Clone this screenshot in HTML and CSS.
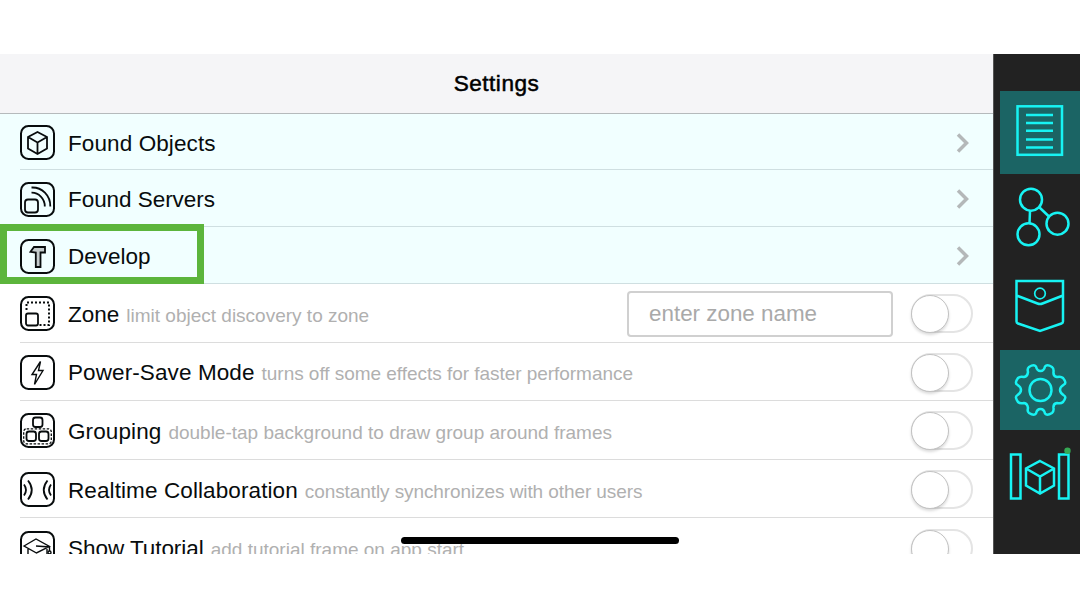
FILE: index.html
```html
<!DOCTYPE html>
<html lang="en">
<head>
<meta charset="utf-8">
<title>Settings</title>
<link rel="stylesheet" href="styles.css">
</head>
<body>
<div class="device">
  <main class="panel">
    <header class="header"><h1 class="title">Settings</h1></header>
    <div class="row nav">
      <svg class="icon" viewBox="0 0 35 35"><rect class="frame" x="1" y="1" width="33" height="33" rx="7.500"/><path d="M17.500 7 27 12v11.500l-9.500 5.500-9.500-5.500V12zM8 12l9.500 5.500L27 12M17.500 17.500V29"/></svg>
      <span class="label">Found Objects</span>
      <svg class="chevron" viewBox="0 0 14 20"><path d="M2 1.500l8.500 8.500L2 18.500"/></svg>
    </div>
    <div class="row nav">
      <svg class="icon" viewBox="0 0 35 35"><rect class="frame" x="1" y="1" width="33" height="33" rx="7.500"/><rect x="5" y="17.500" width="13" height="13" rx="3"/><path d="M11.500 10.700C18.500 10.500 25 16.500 24.800 24.500M11.500 5.500C22 5 30.500 13.500 30.300 24.500"/></svg>
      <span class="label servers">Found Servers</span>
      <svg class="chevron" viewBox="0 0 14 20"><path d="M2 1.500l8.500 8.500L2 18.500"/></svg>
    </div>
    <div class="row nav">
      <svg class="icon" viewBox="0 0 35 35"><rect class="frame" x="1" y="1" width="33" height="33" rx="7.500"/><path class="hammer" d="M10.500 12.800l3.500-4.800H25v5.500h-4.500V28h-4.700V13.500z"/></svg>
      <span class="label develop">Develop</span>
      <svg class="chevron" viewBox="0 0 14 20"><path d="M2 1.500l8.500 8.500L2 18.500"/></svg>
    </div>
    <div class="row">
      <svg class="icon" viewBox="0 0 35 35"><rect class="frame" x="1" y="1" width="33" height="33" rx="7.500"/><rect x="6" y="17.500" width="12" height="12" rx="2"/><path class="dots" d="M6.500 14V6.500h22.500v22.500H19"/></svg>
      <span class="label develop">Zone</span><span class="note">limit object discovery to zone</span>
      <input class="zone" type="text" placeholder="enter zone name">
      <span class="toggle"></span>
    </div>
    <div class="row">
      <svg class="icon" viewBox="0 0 35 35"><rect class="frame" x="1" y="1" width="33" height="33" rx="7.500"/><path class="thin" d="M20.500 6.500l-8.500 13h4.500L14.500 29.500 23 15.500h-4.500z"/></svg>
      <span class="label">Power-Save Mode</span><span class="note power">turns off some effects for faster performance</span>
      <span class="toggle"></span>
    </div>
    <div class="row">
      <svg class="icon" viewBox="0 0 35 35"><rect class="frame" x="1" y="1" width="33" height="33" rx="7.500"/><rect x="13" y="4.500" width="9.500" height="9.500" rx="2.500"/><rect x="6.500" y="18.500" width="9.500" height="9.500" rx="2.500"/><rect x="19" y="18.500" width="9.500" height="9.500" rx="2.500"/><rect class="dash" x="3.700" y="15.800" width="27.600" height="15" rx="3"/></svg>
      <span class="label">Grouping</span><span class="note">double-tap background to draw group around frames</span>
      <span class="toggle"></span>
    </div>
    <div class="row">
      <svg class="icon" viewBox="0 0 35 35"><rect class="frame" x="1" y="1" width="33" height="33" rx="7.500"/><path d="M4 12.500q4 5.500 0 11M8 8.500q7.500 9.500 0 19M31 12.500q-4 5.500 0 11M27.500 8.500q-7.500 9.500 0 19"/></svg>
      <span class="label">Realtime Collaboration</span><span class="note realtime">constantly synchronizes with other users</span>
      <span class="toggle"></span>
    </div>
    <div class="row">
      <svg class="icon" viewBox="0 0 35 35"><rect class="frame" x="1" y="1" width="33" height="33" rx="7.500"/><path class="thin" d="M4 15l12-7 13.500 7.500-13 6.500zM16 15l13.500 1V20M8 18v9M27 18v9"/><circle class="thin" cx="29.500" cy="21.500" r="1.500"/></svg>
      <span class="label tutorial">Show Tutorial</span><span class="note">add tutorial frame on app start</span>
      <span class="toggle"></span>
    </div>
    <div class="home-bar"></div>
  </main>
  <nav class="sidebar">
    <div class="tab tab-list active">
      <svg viewBox="0 0 80 82"><rect x="17.500" y="14.800" width="44.500" height="48.500"/><path d="M26 23.500h27M26 31.500h27M26 39.300h27M26 48h27M26 56h27"/></svg>
    </div>
    <div class="tab tab-nodes">
      <svg viewBox="0 0 80 88"><circle cx="31" cy="25.700" r="11"/><circle cx="28.500" cy="60.300" r="11"/><circle cx="57.500" cy="49.700" r="11"/><path d="M30 37l-.5 12.500M39.500 33.500l10 9.500"/></svg>
    </div>
    <div class="tab tab-pocket">
      <svg viewBox="0 0 80 88"><path d="M16.500 19H63V59.500q0 1.500-1.500 2L40 69 18 61.500q-1.500-.5-1.500-2zM16.500 33.500l21 8q2.500 1 5 0L63 33.500"/><circle class="button" cx="40" cy="31.500" r="5.300"/></svg>
    </div>
    <div class="tab tab-gear active">
      <svg viewBox="0 0 80 80"><circle cx="40.500" cy="40" r="11"/><path d="M29 17Q34 14 36 16.500Q37 21 40.500 21T45 16.500Q47 14 52 17Q54 18.500 53.500 22Q53 26.500 57 27Q61 26 63 28Q67 33 64 34.500Q60 37 60 40T64 45.500Q67 47 63 52Q61 54 57 53Q53 53.500 53.500 58Q54 61.500 52 63Q47 66 45 63.500Q44 59 40.500 59T36 63.500Q34 66 29 63Q27 61.500 28 58Q27.500 53.500 24 53Q20 54 18 52Q14.500 47 17 45.500Q21 43 21 40T17 34.500Q14.500 33 18 28Q20 26 24 27Q27.500 26.500 28 22Q27 18.500 29 17Z"/></svg>
    </div>
    <div class="tab tab-space">
      <svg viewBox="0 0 80 88"><path d="M11 24.500h9.500v44H11zM59 24.500h9.500v44H59zM40 31l14 7.500v17L40 63.500l-14-8v-17zM26 38.500l14 8 14-8M40 46.500v17"/><circle class="status" cx="67.500" cy="20.700" r="3.200"/></svg>
    </div>
  </nav>
  <div class="highlight"></div>
</div>
</body>
</html>
```
FILE: styles.css
```css
*, *::before, *::after { box-sizing: border-box; }
body {
  margin: 0;
  height: 608px;
  padding: 54px 0;
  overflow: hidden;
  background: #fff;
  font-family: "Liberation Sans", Arial, sans-serif;
}
.device {
  position: relative;
  display: flex;
  height: 500px;
  overflow: hidden;
}
.panel {
  position: relative;
  flex: 1;
  height: 500px;
  overflow: hidden;
}
.header {
  display: flex;
  align-items: center;
  justify-content: center;
  height: 60px;
  background: #f5f5f7;
  border-bottom: 1.500px solid #b5babc;
}
.title {
  margin: 1px 0 0;
  font-size: 22.600px;
  font-weight: 400;
  letter-spacing: .500px;
  -webkit-text-stroke: .500px #000;
}
.row {
  position: relative;
  display: flex;
  align-items: center;
  height: 58.600px;
  padding: 1px 20px 0;
}
.row::after {
  content: "";
  position: absolute;
  left: 20px;
  right: 0;
  bottom: 0;
  height: 1px;
  background: #dcdcdc;
}
.nav {
  height: 57px;
  padding-top: 1px;
  background: #f1ffff;
}
.nav::after { background: #cfdfe1; }
.header + .nav { height: 56px; }
.icon {
  flex: none;
  width: 35px;
  height: 35px;
  margin-right: 13px;
  fill: none;
  stroke: #080c0d;
  stroke-width: 1.800;
}
.frame { fill: none; stroke-width: 2; }
.hammer { fill: #c4cccd; }
.thin { stroke-width: 1.400; }
.dots { stroke-width: 2; stroke-dasharray: 2 2; }
.dash { stroke-width: 1.300; stroke-dasharray: 2.500 1.500; }
.label {
  padding-top: 2px;
  font-size: 22.500px;
  letter-spacing: .100px;
  white-space: nowrap;
  color: #080c0d;
}
.servers, .tutorial { letter-spacing: -.050px; }
.develop { letter-spacing: 0; }
.note {
  margin-left: 7px;
  padding-top: 4px;
  font-size: 19px;
  white-space: nowrap;
  color: #b0b0b0;
}
.power { letter-spacing: -.040px; }
.realtime { letter-spacing: -.090px; }
.chevron {
  width: 14px;
  height: 20px;
  margin-left: auto;
  margin-right: 3px;
  fill: none;
  stroke: #b4b8b9;
  stroke-width: 3.500;
}
.zone {
  width: 266px;
  height: 46px;
  margin-left: auto;
  padding: 1px 20px 0;
  border: 2px solid #d0d0d0;
  border-radius: 4px;
  background: #fff;
  font: 22.400px "Liberation Sans", Arial, sans-serif;
}
.zone::placeholder { color: #a9a9a9; opacity: 1; }
.toggle {
  flex: none;
  width: 62px;
  height: 39px;
  margin-left: auto;
  border: 2px solid #e4e4e4;
  border-radius: 20px;
}
.zone + .toggle { margin-left: 18px; }
.toggle::before {
  content: "";
  display: block;
  width: 38px;
  height: 38px;
  margin: -1px 0 0 -2px;
  border: 1px solid #c2c2c2;
  border-radius: 50%;
  background: #fff;
  box-shadow: 0 2px 3px rgba(0, 0, 0, .15);
}
.home-bar {
  position: absolute;
  left: 401px;
  bottom: 10px;
  width: 278px;
  height: 7px;
  border-radius: 4px;
  background: #000;
}
.sidebar {
  display: flex;
  flex-direction: column;
  width: 87px;
  padding: 37px 0 0 6px;
  border-left: 1px solid #555;
  background: #222;
}
.tab { flex: none; height: 88px; }
.tab svg {
  display: block;
  width: 80px;
  height: 100%;
  fill: none;
  stroke: #17f3f3;
  stroke-width: 2.500;
}
.active { background: #1b6464; }
.tab-list { height: 83px; }
.tab-gear { height: 80px; }
.button { stroke-width: 1.700; }
.tab .status { fill: #35a853; stroke: none; }
.highlight {
  position: absolute;
  left: 0;
  top: 170px;
  width: 204px;
  height: 60px;
  border: 7.500px solid #5cb53c;
}
```
